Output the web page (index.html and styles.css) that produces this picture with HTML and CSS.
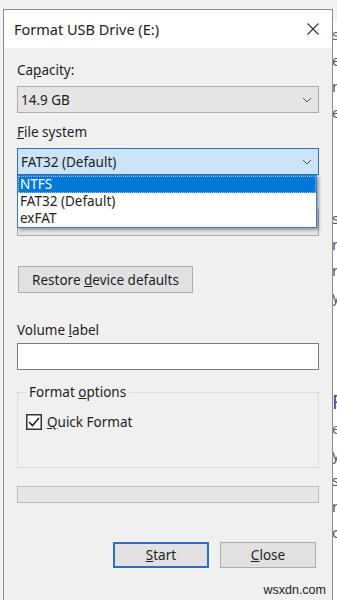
FILE: index.html
```html
<!DOCTYPE html>
<html lang="en">
<head>
  <meta charset="UTF-8">
  <meta name="viewport" content="width=device-width, initial-scale=1.0">
  <title>Format USB Drive (E:)</title>
  <link rel="stylesheet" href="styles.css">
</head>
<body>
  <div class="screen">
    <div class="dialog">
      <div class="titlebar">
        <span class="title">Format USB Drive (E:)</span>
        <svg class="close-x" width="12" height="12" viewBox="0 0 12 12">
          <path d="M0.5 0.5 L11.5 11.5 M11.5 0.5 L0.5 11.5" stroke="#333" stroke-width="1.1" fill="none"/>
        </svg>
      </div>
      <div class="body">
        <div class="field">
          <label>Ca<u>p</u>acity:</label>
          <div class="select">
            <span>14.9 GB</span>
            <svg class="chev" width="10" height="6" viewBox="0 0 10 6"><path d="M1 1 L5 5 L9 1" stroke="#555" fill="none"/></svg>
          </div>
        </div>

        <div class="field fs">
          <label><u>F</u>ile system</label>
          <div class="select open">
            <span>FAT32 (Default)</span>
            <svg class="chev" width="10" height="6" viewBox="0 0 10 6"><path d="M1 1 L5 5 L9 1" stroke="#555" fill="none"/></svg>
          </div>
          <ul class="droplist">
            <li class="hl">NTFS</li>
            <li>FAT32 (Default)</li>
            <li>exFAT</li>
          </ul>
          <div class="select hidden-under"></div>
        </div>

        <button class="btn restore">Restore <u>d</u>evice defaults</button>

        <div class="field vol">
          <label>Volume <u>l</u>abel</label>
          <div class="input"></div>
        </div>

        <fieldset class="group">
          <legend>Format <u>o</u>ptions</legend>
          <div class="check">
            <svg class="box" width="16" height="16" viewBox="0 0 16 16">
              <rect x="0.75" y="0.75" width="14.5" height="14.5" fill="#fff" stroke="#333" stroke-width="1.5"/>
              <path d="M3 8 L6.5 11.5 L13 4" stroke="#222" stroke-width="1.6" fill="none"/>
            </svg>
            <span><u>Q</u>uick Format</span>
          </div>
        </fieldset>

        <div class="progress"></div>

        <div class="actions">
          <button class="btn act primary"><u>S</u>tart</button>
          <button class="btn act"><u>C</u>lose</button>
        </div>
        <div class="mark">wsxdn.com</div>
      </div>
    </div>
    <div class="behind">
      <span class="bg-g">s</span>
      <span>e</span>
      <span>n</span>
      <span>e</span>
      <span class="gap">s</span>
      <span>r</span>
      <span>r</span>
      <span>y</span>
      <span class="gap big">F</span>
      <span class="bg-g">e</span>
      <span>y</span>
      <span>s</span>
      <span>r</span>
      <span>c</span>
    </div>
  </div>
</body>
</html>
```

FILE: styles.css
```css
/* Windows format dialog */
* {
  box-sizing: border-box;
}
body {
  margin: 0;
  background: #f3f3f3;
  font-family: "Noto Sans", "Open Sans", Arial, sans-serif;
  font-size: 13.5px;
  color: #1e1e1e;
}
.screen {
  display: flex;
  width: 337px;
  height: 600px;
  overflow: hidden;
}
.dialog {
  flex: none;
  width: 330px;
  margin-top: 9px;
  margin-left: 3px;
  border: 1px solid #8c8c8c;
  border-bottom: none;
  background: #f0f0f0;
  display: flex;
  flex-direction: column;
}
.titlebar {
  height: 38px;
  background: #fff;
  display: flex;
  align-items: center;
  justify-content: space-between;
  padding: 0 13px 0 10px;
}
.title {
  font-size: 14.5px;
  color: #222;
}
.body {
  padding: 12px 13px 0 13px;
  display: flex;
  flex-direction: column;
}
.field label {
  display: block;
  height: 20px;
  line-height: 20px;
  margin-bottom: 6px;
}
.select {
  height: 27px;
  border: 1px solid #adadad;
  background: #e5e5e5;
  display: flex;
  align-items: center;
  justify-content: space-between;
  padding: 0 6px 0 3px;
}
.select.open {
  background: #cce4f7;
  border-color: #2a6fc0;
}
.fs {
  position: relative;
  margin-top: 9px;
}
.droplist {
  position: absolute;
  left: 0;
  top: 53px;
  width: 300px;
  margin: 0;
  padding: 0;
  list-style: none;
  background: #fff;
  border: 1px solid #3c78c8;
  box-shadow: 2px 2px 3px rgba(0, 0, 0, 0.35);
  z-index: 2;
}
.droplist li {
  height: 17px;
  line-height: 17px;
  padding-left: 2px;
}
.droplist .hl {
  background: #0078d7;
  color: #fff;
  outline: 1px dotted #9cc4ee;
  outline-offset: -1px;
}
.hidden-under {
  margin-top: 34px;
}
.btn {
  font-family: inherit;
  font-size: 13.5px;
  color: #1e1e1e;
  background: #e1e1e1;
  border: 1px solid #adadad;
  padding: 0;
  height: 27px;
}
.restore {
  align-self: flex-start;
  width: 175px;
  margin-top: 30px;
  margin-left: 1px;
}
.vol {
  margin-top: 27px;
}
.vol label {
  margin-bottom: 3px;
}
.input {
  height: 27px;
  background: #fff;
  border: 1px solid #7a7a7a;
}
.group {
  margin: 12px 0 0 0;
  border: 1px solid #dcdcdc;
  padding: 0 8px;
  height: 86px;
}
.group legend {
  padding: 0 3px;
  line-height: 20px;
}
.check {
  display: flex;
  align-items: center;
  gap: 5px;
  margin-top: 11px;
}
.progress {
  margin-top: 18px;
  height: 17px;
  background: #e6e6e6;
  border: 1px solid #bcbcbc;
}
.actions {
  display: flex;
  justify-content: flex-end;
  gap: 11px;
  margin-top: 39px;
  padding-right: 3px;
}
.act {
  width: 96px;
  height: 26px;
}
.primary {
  border: 2px solid #2a6fc0;
}
.mark {
  align-self: flex-end;
  margin-top: 14px;
  margin-right: -7px;
  line-height: 16px;
  font-family: "Liberation Sans", Arial, sans-serif;
  font-size: 12.5px;
  color: #222;
}
.behind {
  flex: 1;
  margin-top: 21px;
  display: flex;
  flex-direction: column;
  font-size: 15px;
  line-height: 26px;
  color: #555;
  overflow: hidden;
  background: #fff;
}
.behind span {
  margin-left: -1px;
}
.behind .gap {
  margin-top: 80px;
}
.behind .big {
  font-size: 20px;
  color: #3a4a8a;
}
.bg-g {
  color: #4a7a4a;
}
```
